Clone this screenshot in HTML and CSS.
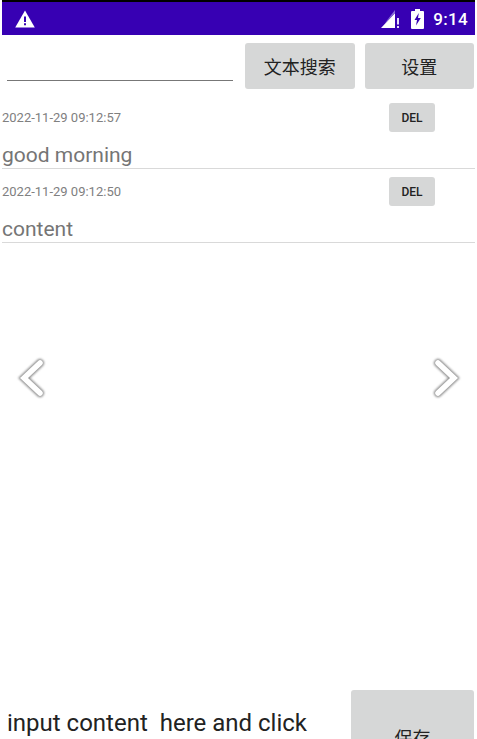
FILE: index.html
```html
<!DOCTYPE html>
<html lang="zh">
<head>
<meta charset="utf-8">
<title>Notes</title>
<link rel="stylesheet" href="styles.css">
</head>
<body>
<div class="screen">
  <header class="status">
    <svg class="warn" width="20" height="18" viewBox="0 0 20 18"><path d="M10 .5 19.800 17.500H.2Z" fill="#fff"/><path d="M9 6.500h2V12H9zM9 13.300h2v2H9z" fill="#3700b3"/></svg>
    <div class="status-right">
      <svg class="signal" width="19" height="20" viewBox="0 0 19 20"><path d="M0 19 14 4v15Z" fill="#fff"/><path d="M7 11.500 14 4V1L4 14Z" fill="#8a6fd6"/><path d="M16 9h2v6.500h-2zM16 17h2v2h-2z" fill="#e6defa"/></svg>
      <svg class="battery" width="13" height="20" viewBox="0 0 13 20"><path d="M4 0h5v2h3a1 1 0 0 1 1 1v16a1 1 0 0 1-1 1H1a1 1 0 0 1-1-1V3a1 1 0 0 1 1-1h3Z" fill="#fff"/><path d="M7.800 4 3.500 11H6l-1 5.500L9.800 9H7Z" fill="#3700b3"/></svg>
      <span class="clock">9:14</span>
    </div>
  </header>
  <div class="toolbar">
    <div class="search-field"></div>
    <button class="btn btn-top btn-search">文本搜索</button>
    <button class="btn btn-top btn-settings">设置</button>
  </div>
  <section class="list">
    <article class="note">
      <div class="note-head"><span class="date">2022-11-29 09:12:57</span><button class="btn btn-del">DEL</button></div>
      <div class="note-text">good morning</div>
    </article>
    <article class="note">
      <div class="note-head"><span class="date">2022-11-29 09:12:50</span><button class="btn btn-del">DEL</button></div>
      <div class="note-text">content</div>
    </article>
  </section>
  <svg class="arrow arrow-left" width="34" height="44" viewBox="0 0 34 44"><path class="arrow-edge" d="M24 7 8 22l16 15" /><path class="arrow-core" d="M24 7 8 22l16 15"/></svg>
  <svg class="arrow arrow-right" width="34" height="44" viewBox="0 0 34 44"><path class="arrow-edge" d="M8 7l16 15L8 37"/><path class="arrow-core" d="M8 7l16 15L8 37"/></svg>
  <footer class="composer">
    <div class="hint">input content&nbsp; here and click</div>
    <button class="btn btn-save">保存</button>
  </footer>
</div>
</body>
</html>
```
FILE: styles.css
```css
* { box-sizing: border-box; }
html, body { margin: 0; padding: 0; height: 100%; overflow: hidden; background: #fff; }
body { font-family: Roboto, "Noto Sans CJK SC", sans-serif; }
.screen { position: relative; width: 477px; height: 739px; overflow: hidden; display: flex; flex-direction: column; }
.status {
  height: 35px; flex: none; margin: 0 2px; background: #3700b3; border-top: 2px solid #000;
  display: flex; align-items: center; justify-content: space-between; padding: 0 7px 0 13px; color: #fff;
}
.warn { display: block; }
.status-right { display: flex; align-items: center; }
.signal { display: block; margin-right: 11px; }
.battery { display: block; margin-right: 9px; }
.clock { font-size: 17px; font-weight: 500; letter-spacing: .3px; }
.btn {
  display: flex; align-items: center; justify-content: center; border: 0; padding: 0; margin: 0;
  background: #d6d7d7; border-radius: 3px; color: #222; font-family: inherit;
}
.toolbar { display: flex; height: 55px; flex: none; padding: 8px 3px 0 7px; align-items: flex-start; }
.search-field { width: 227px; height: 38px; border-bottom: 1px solid #777; margin-right: 11px; }
.btn-top { width: 110px; height: 46px; font-size: 18px; }
.btn-search { margin-right: 10px; margin-left: 1px; }
.list { display: flex; flex-direction: column; padding-top: 5px; }
.note { margin-left: 2px; width: 473px; height: 74px; border-bottom: 1px solid #d9d9d9; }
.note-head { display: flex; justify-content: space-between; height: 48px; align-items: flex-start; padding-right: 40px; }
.date { font-size: 13px; line-height: 16px; margin-top: 15px; color: #808080; }
.btn-del { width: 46px; height: 29px; margin-top: 8px; font-size: 12px; font-weight: 500; }
.note-text { font-size: 21px; line-height: 24px; color: #757575; }
.arrow { position: absolute; top: 356px; }
.arrow path { fill: none; stroke-linecap: round; }
.arrow-edge { stroke: #8f8f8f; stroke-width: 8; filter: blur(.8px); }
.arrow-core { stroke: #fff; stroke-width: 5.5; }
.arrow-left { left: 16px; }
.arrow-right { left: 430px; }
.composer { position: absolute; left: 0; top: 690px; width: 477px; display: flex; justify-content: space-between; padding: 0 3px 0 7px; }
.hint { font-size: 24px; line-height: 28px; margin-top: 19px; color: #222; }
.btn-save { width: 123px; height: 94px; font-size: 18px; }
```
